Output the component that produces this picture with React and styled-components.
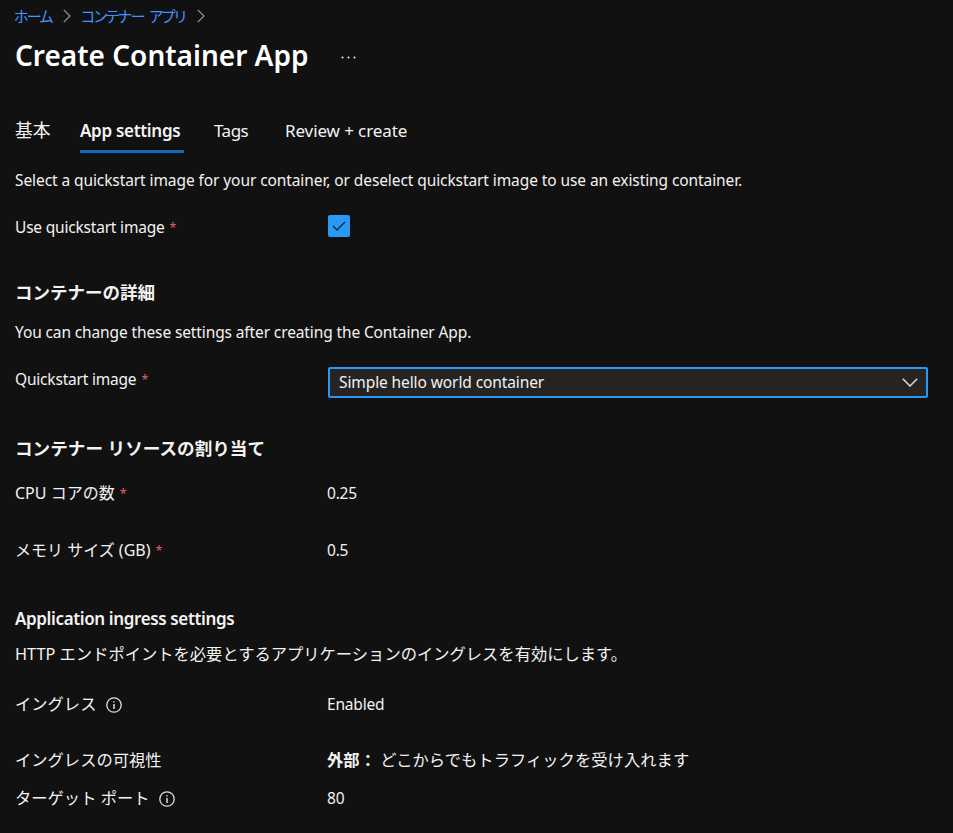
import React, { useState } from "react";
import styled, { createGlobalStyle } from "styled-components";

const GlobalStyle = createGlobalStyle`
  body {
    margin: 0;
    background-color: #111111;
    color: #f3f2f1;
    font-family: "Noto Sans", "Noto Sans CJK JP", sans-serif;
    font-size: 15.5px;
  }
`;

// Page wrapper
const Page = styled.main`
  width: 953px;
  height: 833px;
  padding: 0 25px 0 15px;
  box-sizing: border-box;
  overflow: hidden;
  white-space: nowrap;
`;

// Breadcrumb (Top)
const Breadcrumb = styled.nav`
  display: flex;
  align-items: center;
  height: 32px;
  margin-left: -1px;
`;

const Crumb = styled.a`
  width: ${({ $width }) => $width};
  color: #4294ff;
  font-size: 15px;
  line-height: 30px;
  font-feature-settings: "palt";
  letter-spacing: ${({ $spacing }) => $spacing || "0"};
  word-spacing: 3px;
  text-decoration: none;
`;

const CrumbArrow = styled.svg`
  width: 8px;
  height: 14px;
  margin: 0 10px 0 9px;
  fill: none;
  stroke: #a19f9d;
  stroke-width: 1.1;
`;

// Title and the "more" button beside it
const TitleBar = styled.header`
  display: flex;
  align-items: center;
  height: 48px;
`;

const Title = styled.h1`
  width: 326px;
  height: 48px;
  margin: 0;
  color: #ffffff;
  font-size: 28px;
  font-weight: 600;
  line-height: 46px;
`;

const MoreIcon = styled.svg`
  width: 15px;
  height: 3px;
  margin-top: 2px;
  fill: #f3f2f1;
`;

// Tabs
const TabList = styled.div`
  display: flex;
  margin-top: 29px;
  height: 44px;
`;

const Tab = styled.button`
  width: ${({ $width }) => $width};
  height: 44px;
  margin: 0 ${({ $gap }) => $gap || "0"} 0 0;
  padding: 2px 0 0;
  border: none;
  border-bottom: 3px solid ${({ $active }) => ($active ? "#0f6cbd" : "transparent")};
  background: none;
  color: #f3f2f1;
  font-family: inherit;
  font-size: ${({ $size }) => $size || "17px"};
  font-weight: ${({ $active }) => ($active ? 600 : 400)};
  line-height: 39px;
  letter-spacing: ${({ $spacing }) => $spacing || "0"};
  text-align: left;
  white-space: nowrap;
  cursor: pointer;
`;

// Section text
const Paragraph = styled.p`
  margin: ${({ $top }) => $top} 0 0;
  line-height: ${({ $line }) => $line || "22px"};
  height: 24px;
  font-size: ${({ $size }) => $size || "15.5px"};
  letter-spacing: ${({ $spacing }) => $spacing || "0"};
`;

const Heading = styled.h2`
  margin: ${({ $top }) => $top} 0 0;
  font-size: ${({ $size }) => $size || "17.5px"};
  font-weight: ${({ $weight }) => $weight || 700};
  line-height: 24px;
  letter-spacing: ${({ $spacing }) => $spacing || "0"};
`;

// Form row: label column and value column
const Row = styled.div`
  display: grid;
  grid-template-columns: 313px 600px;
  align-items: start;
  height: ${({ $height }) => $height || "24px"};
  margin-top: ${({ $top }) => $top};
`;

const Label = styled.div`
  display: flex;
  align-items: center;
  font-size: ${({ $size }) => $size || "15.5px"};
  line-height: 24px;
  letter-spacing: ${({ $spacing }) => $spacing || "0"};
`;

const Value = styled.div`
  margin-left: -1px;
  font-size: ${({ $size }) => $size || "15.5px"};
  line-height: 24px;
  letter-spacing: ${({ $spacing }) => $spacing || "-0.2px"};
`;

const Required = styled.span`
  height: 24px;
  margin-left: 5px;
  color: #e0616b;
  font-size: 12.5px;
  line-height: 26px;
`;

const CheckBox = styled.button`
  display: flex;
  align-items: center;
  justify-content: center;
  width: 22px;
  height: 22px;
  padding: 0;
  border: none;
  border-radius: 2px;
  background-color: #2899f5;
  cursor: pointer;

  svg {
    width: 14px;
    height: 10px;
    fill: none;
    stroke: #1b1a19;
    stroke-width: 1.1;
  }
`;

const Select = styled.button`
  display: flex;
  align-items: center;
  justify-content: space-between;
  width: 600px;
  height: 31px;
  padding: 0 8px 1px 9px;
  box-sizing: border-box;
  border: 2px solid #2899f5;
  border-radius: 2px;
  background-color: #252423;
  color: #f3f2f1;
  font-family: inherit;
  font-size: 15.5px;
  line-height: 25px;
  letter-spacing: ${({ $spacing }) => $spacing || "0"};
  cursor: pointer;

  svg {
    width: 16px;
    height: 9px;
    fill: none;
    stroke: #d6d4d2;
    stroke-width: 1.6;
  }
`;

const InfoSvg = styled.svg`
  width: 16px;
  height: 16px;
  margin: 2px 0 0 ${({ $left }) => $left};
  fill: none;
  stroke: #e1dfdd;
`;

function Arrow() {
  return (
    <CrumbArrow viewBox="0 0 8 14">
      <path d="M0.8 0.8 L7 7 L0.8 13.2" />
    </CrumbArrow>
  );
}

function InfoIcon({ left }) {
  return (
    <InfoSvg viewBox="0 0 16 16" $left={left}>
      <circle cx="8" cy="8" r="7.2" strokeWidth="1.3" />
      <path d="M8 7 V12 M8 4.3 V5.6" strokeWidth="1.5" />
    </InfoSvg>
  );
}

const tabs = [
  { name: "基本", width: "36px", gap: "29px", size: "17.8px" },
  { name: "App settings", width: "104px", gap: "30px", spacing: "-0.3px" },
  { name: "Tags", width: "36px", gap: "35px", spacing: "-0.5px" },
  { name: "Review + create", width: "124px", spacing: "-0.1px" },
];

export default function App() {
  const [activeTab, setActiveTab] = useState("App settings");
  const [checked, setChecked] = useState(true);

  return (
    <Page>
      <GlobalStyle />

      <Breadcrumb>
        <Crumb $width="40px" $spacing="-1.7px">ホーム</Crumb>
        <Arrow />
        <Crumb $width="107px" $spacing="-1.5px">コンテナー アプリ</Crumb>
        <Arrow />
      </Breadcrumb>

      <TitleBar>
        <Title>Create Container App</Title>
        <MoreIcon viewBox="0 0 15 3">
          <circle cx="1.5" cy="1.5" r="1" />
          <circle cx="7.5" cy="1.5" r="1" />
          <circle cx="13.5" cy="1.5" r="1" />
        </MoreIcon>
      </TitleBar>

      <TabList>
        {tabs.map((tab) => (
          <Tab
            key={tab.name}
            $width={tab.width}
            $gap={tab.gap}
            $size={tab.size}
            $spacing={tab.spacing}
            $active={tab.name === activeTab}
            onClick={() => setActiveTab(tab.name)}
          >
            {tab.name}
          </Tab>
        ))}
      </TabList>

      <Paragraph $top="16px" $spacing="-0.09px">
        Select a quickstart image for your container, or deselect quickstart image to use an existing container.
      </Paragraph>

      <Row $top="22px">
        <Label $spacing="-0.2px">
          Use quickstart image<Required>*</Required>
        </Label>
        <CheckBox onClick={() => setChecked(!checked)}>
          {checked && (
            <svg viewBox="0 0 14 10">
              <path d="M1 5 L5 9 L13 1" />
            </svg>
          )}
        </CheckBox>
      </Row>

      {/* Container details */}
      <Heading $top="41px">コンテナーの詳細</Heading>
      <Paragraph $top="17px" $spacing="-0.12px">
        You can change these settings after creating the Container App.
      </Paragraph>

      <Row $top="22px" $height="31px">
        <Label $spacing="-0.2px">
          Quickstart image<Required>*</Required>
        </Label>
        <Select $spacing="-0.1px">
          Simple hello world container
          <svg viewBox="0 0 16 9">
            <path d="M0.8 0.8 L8 8 L15.2 0.8" />
          </svg>
        </Select>
      </Row>

      {/* Resource allocation */}
      <Heading $top="38px" $size="17.6px">コンテナー リソースの割り当て</Heading>
      <Row $top="21px">
        <Label $size="16px">
          CPU コアの数<Required>*</Required>
        </Label>
        <Value>0.25</Value>
      </Row>
      <Row $top="33px">
        <Label $size="16px">
          メモリ サイズ (GB)<Required>*</Required>
        </Label>
        <Value>0.5</Value>
      </Row>

      {/* Ingress */}
      <Heading $top="45px" $size="17px" $weight={600} $spacing="-0.37px">
        Application ingress settings
      </Heading>
      <Paragraph $top="11px" $size="16.3px" $line="24px">
        HTTP エンドポイントを必要とするアプリケーションのイングレスを有効にします。
      </Paragraph>
      <Row $top="26px">
        <Label $size="16.3px">
          イングレス
          <InfoIcon left="10px" />
        </Label>
        <Value>Enabled</Value>
      </Row>
      <Row $top="32px">
        <Label $size="16.3px">イングレスの可視性</Label>
        <Value $size="16.3px" $spacing="0.05px">
          <strong>外部：</strong> どこからでもトラフィックを受け入れます
        </Value>
      </Row>
      <Row $top="14px">
        <Label $size="16.3px">
          ターゲット ポート
          <InfoIcon left="10px" />
        </Label>
        <Value>80</Value>
      </Row>
    </Page>
  );
}
